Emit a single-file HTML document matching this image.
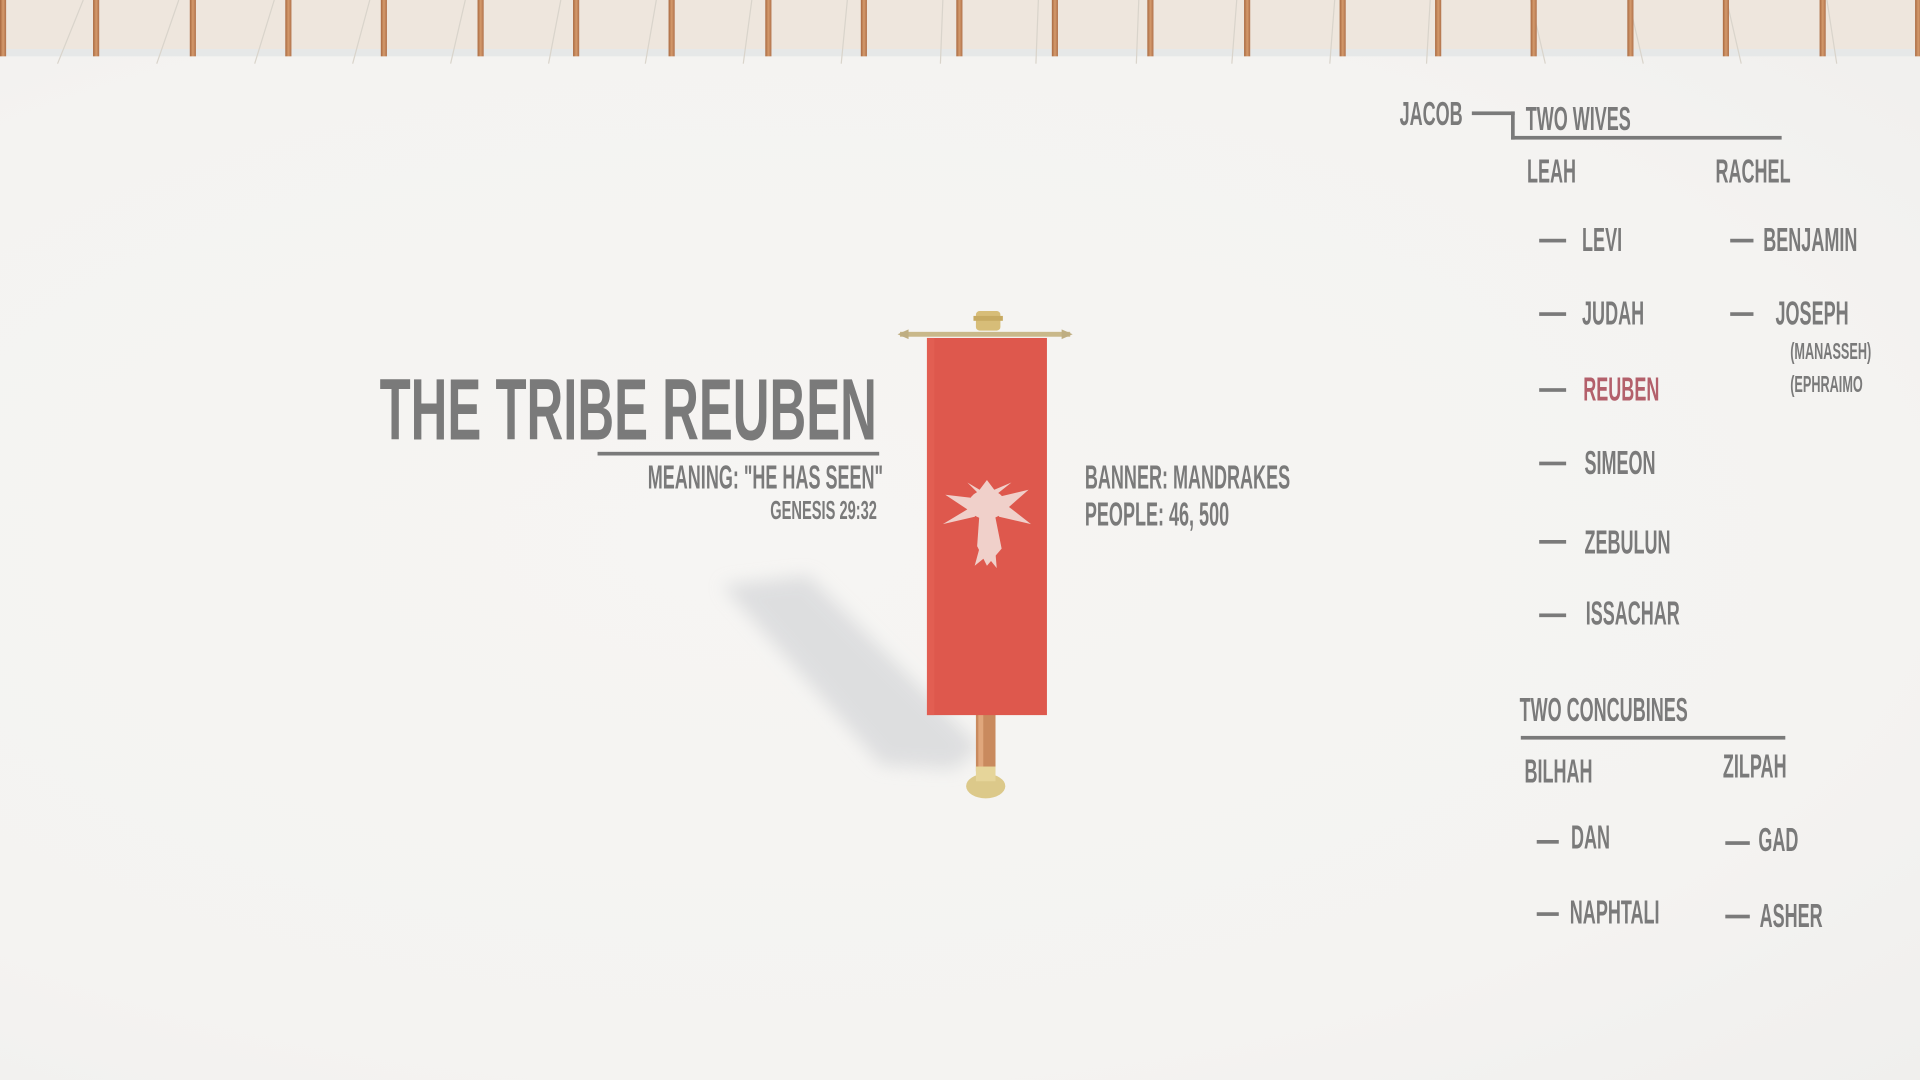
<!DOCTYPE html>
<html><head><meta charset="utf-8"><style>
html,body{margin:0;padding:0;width:1920px;height:1080px;overflow:hidden;background:#f4f3f1}
#s{position:absolute;left:0;top:0;width:1568px;height:882px;transform:scale(1.22449);transform-origin:0 0;background:radial-gradient(ellipse at 40% 50%,#f6f5f3 0%,#f4f3f1 70%,#f0efed 100%);overflow:hidden}
.t{position:absolute;font-family:"Liberation Sans",sans-serif;font-weight:bold;line-height:1;color:#7a7a7a;white-space:nowrap;transform:scaleX(.545);transform-origin:0 0}
.d{position:absolute;height:3px;background:#7a7a7a}
.p{position:absolute;top:0;width:5px;height:46px;background:linear-gradient(90deg,#a8683f,#d49a6c,#b0714a)}
</style></head><body><div id="s">
<div style="position:absolute;left:0;top:0;width:1568px;height:43px;background:#eee6dd"></div>
<div style="position:absolute;left:0;top:40px;width:1568px;height:6px;background:#e6e8e8"></div>
<svg style="position:absolute;left:0;top:0" width="1568" height="60"><g stroke="#d9d4cb" stroke-width="1" fill="none">
<path d="M68,0 L47,52 M146,0 L128,52 M224,0 L208,52 M302,0 L288,52 M380,0 L368,52 M458,0 L448,52 M536,0 L527,52 M614,0 L607,52 M692,0 L687,52 M770,0 L768,52 M848,0 L846,52 M930,0 L928,52 M1010,0 L1006,52 M1090,0 L1086,52 M1168,0 L1165,52 M1250,0 L1262,52 M1330,0 L1342,52 M1410,0 L1422,52 M1492,0 L1500,52"/></g></svg>
<div class="p" style="left:0"></div><div class="p" style="left:76px"></div><div class="p" style="left:155px"></div><div class="p" style="left:233px"></div><div class="p" style="left:311px"></div><div class="p" style="left:390px"></div><div class="p" style="left:468px"></div><div class="p" style="left:546px"></div><div class="p" style="left:625px"></div><div class="p" style="left:703px"></div><div class="p" style="left:781px"></div><div class="p" style="left:859px"></div><div class="p" style="left:937px"></div><div class="p" style="left:1016px"></div><div class="p" style="left:1094px"></div><div class="p" style="left:1172px"></div><div class="p" style="left:1250px"></div><div class="p" style="left:1329px"></div><div class="p" style="left:1407px"></div><div class="p" style="left:1486px"></div><div class="p" style="left:1564px"></div>

<svg style="position:absolute;left:0;top:0" width="1568" height="882"><defs><filter id="b"><feGaussianBlur stdDeviation="7"/></filter></defs>
<polygon points="590,478 660,470 800,610 780,628 720,625" fill="#d8d9db" filter="url(#b)" opacity=".8"/>
<rect x="797" y="580" width="16" height="50" fill="#c98a5e"/>
<rect x="799" y="580" width="4" height="50" fill="#e0a77c"/>
<ellipse cx="805" cy="642" rx="16" ry="10" fill="#dcc98a"/>
<rect x="797" y="626" width="16" height="12" fill="#e6d59a"/>
<rect x="757" y="276" width="98" height="308" fill="#de584d"/>
<rect x="757" y="276" width="6" height="308" fill="#e46256" opacity=".6"/>
<rect x="735" y="271" width="139" height="4" fill="#c9b88a"/>
<polygon points="733,273 742,269 742,277" fill="#bfae82"/><polygon points="876,273 867,269 867,277" fill="#bfae82"/>
<rect x="797" y="254" width="20" height="16" rx="3" fill="#d7bd78"/>
<rect x="795" y="258" width="24" height="4" fill="#c7aa62"/>
<g fill="#f2ddd8" opacity=".9">
<ellipse cx="806" cy="412" rx="15" ry="12"/>
<path d="M806,408 L772,404 L790,416 L770,428 L796,422 Z"/>
<path d="M806,408 L840,400 L824,414 L842,428 L816,422 Z"/>
<path d="M806,410 L790,394 L800,400 L806,392 L812,400 L826,394 Z"/>
<path d="M800,418 L812,418 L818,448 L806,462 L798,446 Z"/>
<path d="M802,440 L796,462 L806,454 L814,464 L812,440 Z"/>
</g>
</svg>

<div class="t" style="left:310px;top:300px;font-size:71px;transform:scaleX(.585)">THE TRIBE REUBEN</div>
<div class="d" style="left:488px;top:369px;width:230px"></div>
<div class="t" style="left:529px;top:377px;font-size:27px">MEANING: "HE HAS SEEN"</div>
<div class="t" style="left:629px;top:407px;font-size:21px;transform:scaleX(.57)">GENESIS 29:32</div>
<div class="t" style="left:886px;top:377px;font-size:27px">BANNER: MANDRAKES</div>
<div class="t" style="left:886px;top:407px;font-size:27px">PEOPLE: 46, 500</div>

<div class="t" style="left:1143px;top:80px;font-size:27px">JACOB</div>
<div class="d" style="left:1202px;top:91px;width:35px"></div>
<div class="d" style="left:1234px;top:91px;width:3px;height:23px"></div>
<div class="d" style="left:1234px;top:111px;width:221px"></div>
<div class="t" style="left:1246px;top:84px;font-size:27px">TWO WIVES</div>
<div class="t" style="left:1247px;top:127px;font-size:27px">LEAH</div>
<div class="t" style="left:1401px;top:127px;font-size:27px">RACHEL</div>

<div class="d" style="left:1257px;top:195px;width:22px"></div><div class="t" style="left:1292px;top:183px;font-size:27px">LEVI</div>
<div class="d" style="left:1257px;top:255px;width:22px"></div><div class="t" style="left:1292px;top:243px;font-size:27px">JUDAH</div>
<div class="d" style="left:1257px;top:317px;width:22px"></div><div class="t" style="left:1293px;top:305px;font-size:27px;color:#b3606b">REUBEN</div>
<div class="d" style="left:1257px;top:377px;width:22px"></div><div class="t" style="left:1294px;top:365px;font-size:27px">SIMEON</div>
<div class="d" style="left:1257px;top:441px;width:22px"></div><div class="t" style="left:1294px;top:430px;font-size:27px">ZEBULUN</div>
<div class="d" style="left:1257px;top:501px;width:22px"></div><div class="t" style="left:1295px;top:488px;font-size:27px">ISSACHAR</div>

<div class="d" style="left:1413px;top:195px;width:19px"></div><div class="t" style="left:1440px;top:183px;font-size:27px">BENJAMIN</div>
<div class="d" style="left:1413px;top:255px;width:19px"></div><div class="t" style="left:1450px;top:243px;font-size:27px">JOSEPH</div>
<div class="t" style="left:1462px;top:278px;font-size:19px">(MANASSEH)</div>
<div class="t" style="left:1462px;top:305px;font-size:19px">(EPHRAIMO</div>

<div class="t" style="left:1241px;top:567px;font-size:27px">TWO CONCUBINES</div>
<div class="d" style="left:1242px;top:601px;width:216px"></div>
<div class="t" style="left:1245px;top:617px;font-size:27px">BILHAH</div>
<div class="t" style="left:1407px;top:613px;font-size:27px">ZILPAH</div>
<div class="d" style="left:1255px;top:686px;width:18px"></div><div class="t" style="left:1283px;top:671px;font-size:27px">DAN</div>
<div class="d" style="left:1255px;top:745px;width:18px"></div><div class="t" style="left:1282px;top:732px;font-size:27px">NAPHTALI</div>
<div class="d" style="left:1409px;top:687px;width:20px"></div><div class="t" style="left:1436px;top:673px;font-size:27px">GAD</div>
<div class="d" style="left:1409px;top:747px;width:20px"></div><div class="t" style="left:1437px;top:735px;font-size:27px">ASHER</div>
</div></body></html>
